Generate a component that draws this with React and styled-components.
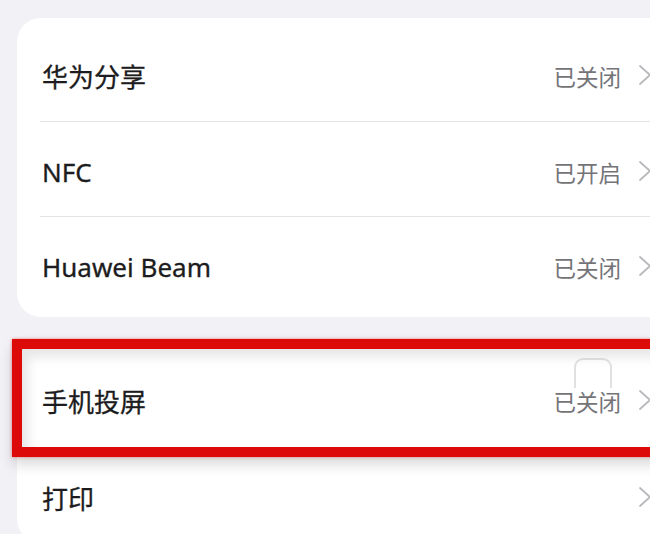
import React from "react";
import styled, { createGlobalStyle } from "styled-components";

const Global = createGlobalStyle`
  html, body {
    margin: 0;
    padding: 0;
    background: #f1f1f6;
    overflow: hidden;
  }
  body {
    font-family: "Noto Sans", "Noto Sans CJK SC", sans-serif;
  }
`;

const Page = styled.div`
  width: 650px;
  height: 534px;
  overflow: hidden;
  padding: 18px 0 0 17px;
  box-sizing: border-box;
  display: flex;
  flex-direction: column;
  gap: 24px;
  background: #f1f1f6;
`;

const Card = styled.div`
  width: 700px;
  background: #ffffff;
  border-radius: 24px;
  padding: ${(p) => p.$pad || "8px 0 6px"};
  box-sizing: border-box;
  flex-shrink: 0;
`;

const Row = styled.div`
  position: relative;
  height: ${(p) => p.$h || 95}px;
  display: flex;
  align-items: center;
  box-sizing: border-box;
  border-top: ${(p) => (p.$divider ? "1.5px solid #e4e4e8" : "none")};
  margin-left: ${(p) => (p.$divider ? "23px" : "0")};
  padding-left: ${(p) => (p.$divider ? "2px" : "25px")};
`;

const Label = styled.span`
  flex: 1;
  font-family: "Noto Sans", "Noto Sans CJK SC", sans-serif;
  font-size: 26px;
  font-weight: 400;
  color: #1c1c20;
  padding-top: 5px;
  -webkit-text-stroke: 0.3px #1c1c20;
`;

const Status = styled.span`
  font-family: "Noto Sans CJK SC", sans-serif;
  font-size: 22.5px;
  color: #747478;
  margin-right: 17px;
  padding-top: 5px;
`;

const Chevron = styled.svg`
  width: 14px;
  height: 22px;
  margin-right: 65px;
  margin-top: 3px;
  flex-shrink: 0;
`;

const Highlight = styled.div`
  position: absolute;
  top: -10px;
  bottom: -10px;
  left: -5px;
  right: -60px;
  border: 10px solid #dd0a0a;
  box-shadow: 0 0 3px rgba(230, 0, 0, 0.45), 0 8px 12px rgba(0, 0, 0, 0.14),
    inset 6px 8px 12px rgba(0, 0, 0, 0.1);
  pointer-events: none;
`;

const Smudge = styled.div`
  position: absolute;
  left: 557px;
  top: 9px;
  width: 34px;
  height: 28px;
  border: 2px solid rgba(170, 170, 175, 0.35);
  border-bottom: none;
  border-radius: 9px 9px 0 0;
  pointer-events: none;
`;

const ChevronIcon = () => (
  <Chevron viewBox="0 0 14 22">
    <path
      d="M2 2 L12 11 L2 20"
      fill="none"
      stroke="#b9b9bd"
      strokeWidth="1.8"
      strokeLinecap="round"
      strokeLinejoin="round"
    />
  </Chevron>
);

const Item = ({ label, status, divider, h, children }) => (
  <Row $divider={divider} $h={h}>
    <Label>{label}</Label>
    {status && <Status>{status}</Status>}
    <ChevronIcon />
    {children}
  </Row>
);

export default function App() {
  return (
    <>
      <Global />
      <Page>
        <Card>
          <Item label="华为分享" status="已关闭" />
          <Item label="NFC" status="已开启" divider />
          <Item label="Huawei Beam" status="已关闭" divider />
        </Card>
        <Card $pad="8px 0 0">
          <Item label="手机投屏" status="已关闭" h={98}>
            <Highlight />
            <Smudge />
          </Item>
          <Item label="打印" h={96} />
        </Card>
      </Page>
    </>
  );
}
